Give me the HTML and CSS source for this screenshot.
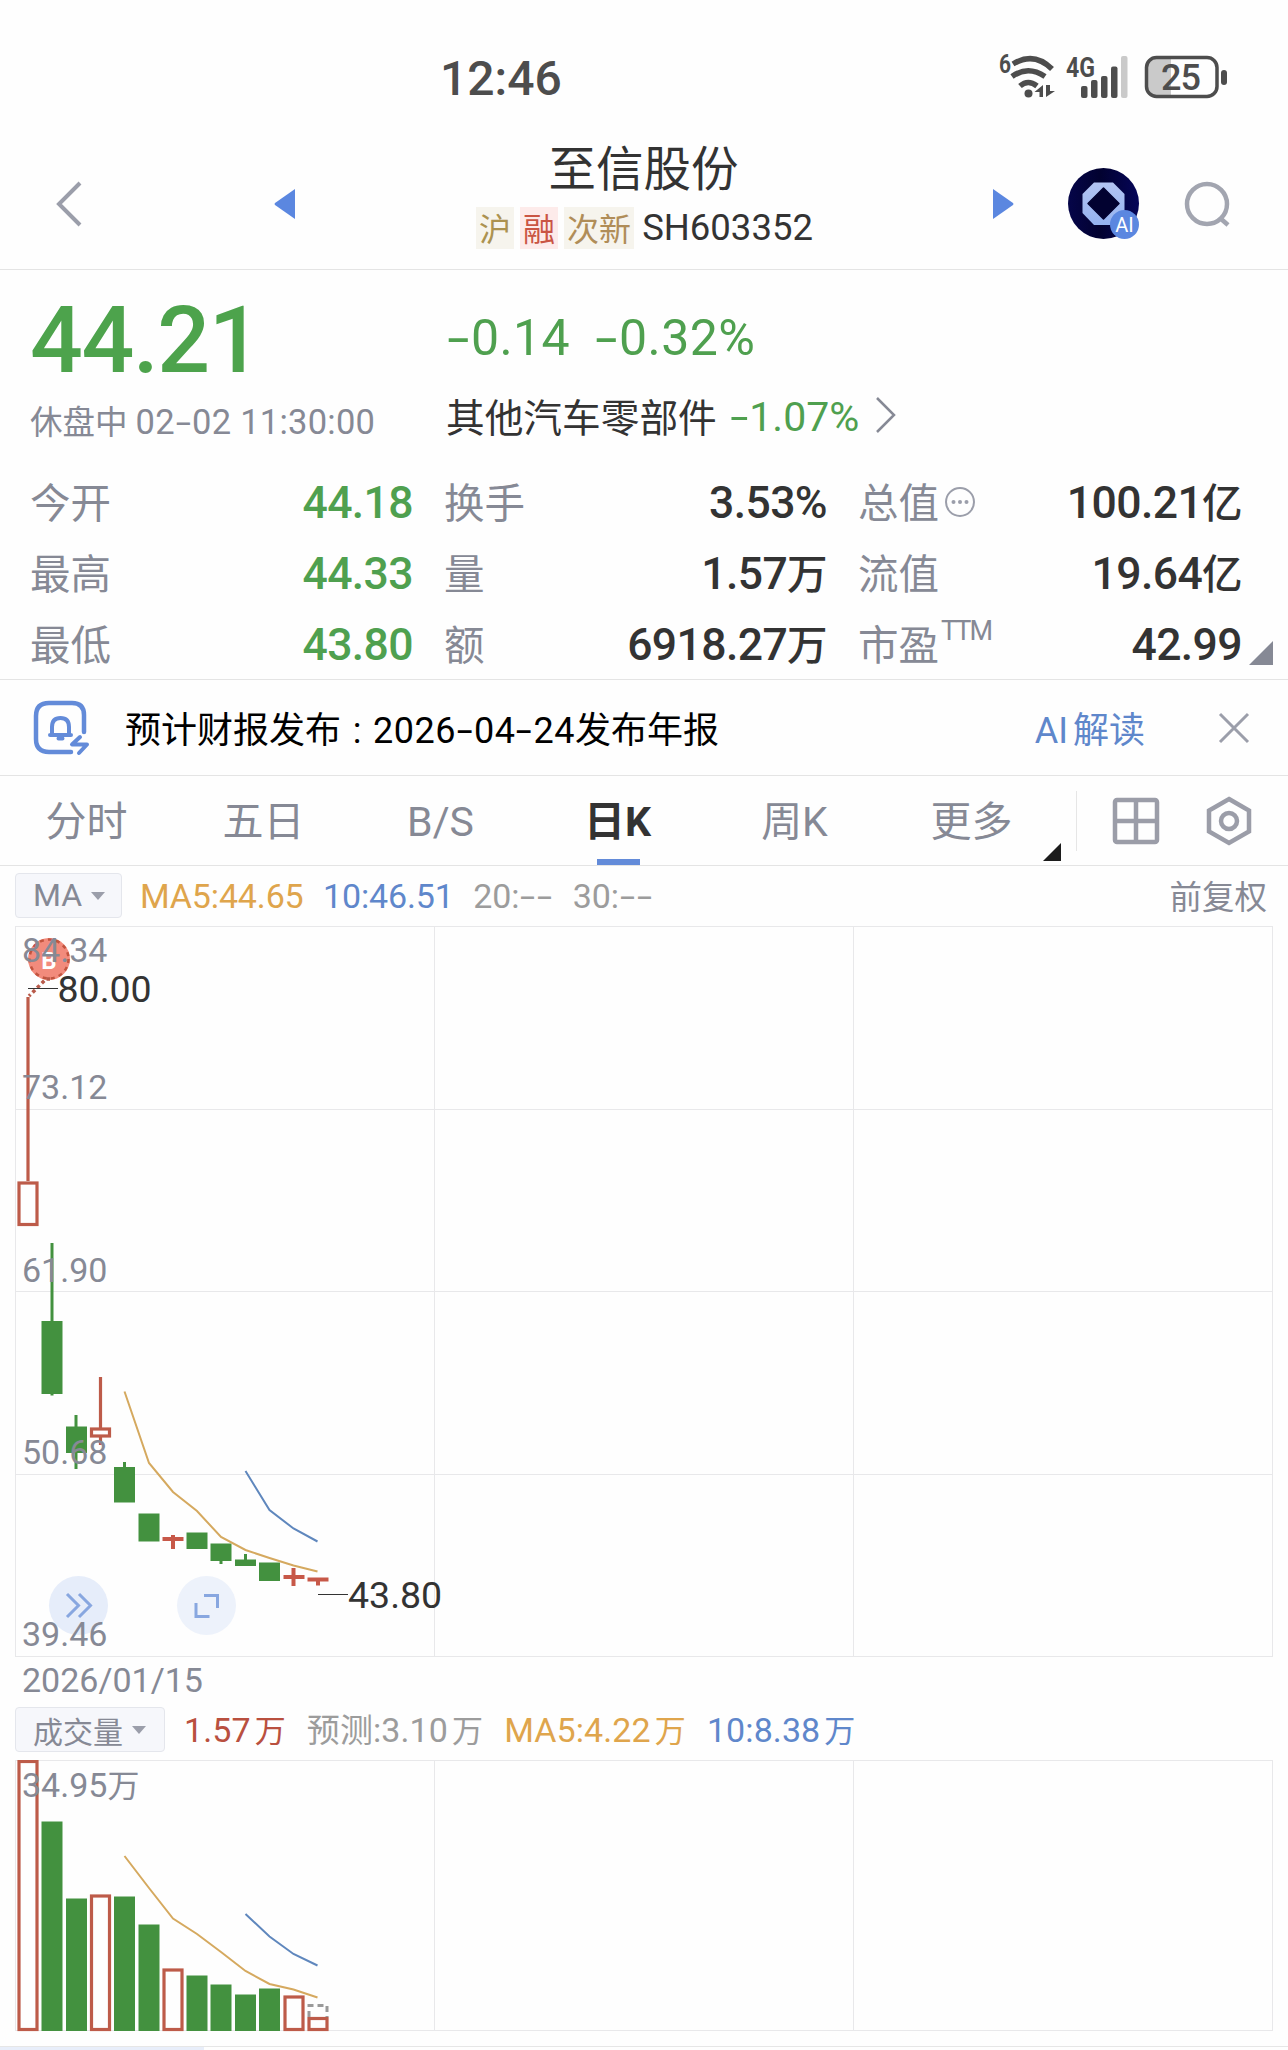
FILE: index.html
```html
<!DOCTYPE html>
<html lang="zh-CN">
<head>
    <meta charset="UTF-8">
    <meta name="viewport" content="width=device-width, initial-scale=1.0">
    <title>至信股份 SH603352</title>
    <link rel="stylesheet" href="styles.css">
</head>
<body>
    <div class="status-bar">
        <span class="clock">12:46</span>
        <svg class="status-icons" width="236" height="56" viewBox="996 48 236 56">
            <text x="999" y="73" class="net-small" textLength="12" lengthAdjust="spacingAndGlyphs">6</text>
            <g fill="none" stroke="#4d4d4d" stroke-width="5.500" stroke-linecap="butt">
                <path d="M1013 64 Q1034 51 1052 69"/>
                <path d="M1012 76.500 Q1028 65 1045 76.500"/>
                <path d="M1020 86 Q1028 79 1037 86"/>
            </g>
            <circle cx="1028.500" cy="93.500" r="4" fill="#4d4d4d"/>
            <path d="M1043 85v12h-3.500v-5h-5zM1046 85v12l9-6h-5v-6z" fill="#4d4d4d"/>
            <text x="1066" y="76.500" class="net" textLength="29" lengthAdjust="spacingAndGlyphs">4G</text>
            <g fill="#4d4d4d">
                <rect x="1081" y="86" width="6.500" height="12" rx="2"/>
                <rect x="1091" y="80" width="6.500" height="18" rx="2"/>
                <rect x="1101" y="76" width="6.500" height="22" rx="2"/>
                <rect x="1111" y="66.500" width="6.500" height="31.500" rx="2"/>
            </g>
            <rect x="1121" y="56" width="6.500" height="42" rx="2" fill="#cacaca"/>
            <path d="M1171 58h-14q-10 0-10 10v18q0 10 10 10h14z" fill="#cacaca"/>
            <rect x="1146.500" y="57.500" width="70.500" height="39" rx="10" fill="none" stroke="#4d4d4d" stroke-width="3.500"/>
            <rect x="1221" y="70" width="6" height="15" rx="3" fill="#4d4d4d"/>
            <text x="1161" y="89.500" class="battery-text" textLength="40">25</text>
        </svg>
    </div>

    <div class="header">
        <svg class="back" width="30" height="50" viewBox="0 0 30 50"><path d="M27 4 6 25l21 21" fill="none" stroke="#9b9eaa" stroke-width="4"/></svg>
        <svg class="prev" width="22" height="32" viewBox="0 0 22 32"><path d="M21 1v30L1 17q-1-1 0-2z" fill="#5b87e0"/></svg>
        <div class="title">
            <div class="name">至信股份</div>
            <div class="code-row">
                <span class="tag">沪</span>
                <span class="tag tag-red">融</span>
                <span class="tag tag-new">次新</span>
                <span class="code">SH603352</span>
            </div>
        </div>
        <svg class="next" width="22" height="32" viewBox="0 0 22 32"><path d="M1 1v30L21 17q1-1 0-2z" fill="#5b87e0"/></svg>
        <svg class="ai-logo" width="72" height="72" viewBox="0 0 72 72">
            <defs>
                <linearGradient id="oct" x1="0" y1="0" x2="0" y2="1">
                    <stop offset="0" stop-color="#b3c4f2"/>
                    <stop offset="1" stop-color="#94b2ef"/>
                </linearGradient>
                <linearGradient id="navy">
                    <stop offset="0" stop-color="#050549"/>
                    <stop offset=".45" stop-color="#020230"/>
                    <stop offset="1" stop-color="#050558"/>
                </linearGradient>
            </defs>
            <circle cx="35.500" cy="35.500" r="35.500" fill="url(#navy)"/>
            <path d="M26 14.500h19L56.500 26v19L45 57H26L14.500 45V26z" fill="url(#oct)"/>
            <path d="M35.500 20 51 35.500 35.500 51 20 35.500z" fill="#020230" stroke="#020230" stroke-width="1.500" stroke-linejoin="round"/>
            <circle cx="56.500" cy="56.500" r="14.500" fill="#5b87e0"/>
            <text x="56.500" y="63.500" class="ai-text">AI</text>
        </svg>
        <svg class="search" width="48" height="48" viewBox="0 0 48 48"><g fill="none" stroke="#a2a5b0" stroke-width="4.500"><circle cx="23" cy="23" r="20"/><path d="M36 37l8 7"/></g></svg>
    </div>

    <div class="quote">
        <div class="quote-top">
            <div class="price-col">
                <div class="price">44.21</div>
                <div class="session">休盘中 <span class="num">02<i class="dash">-</i>02 11:30:00</span></div>
            </div>
            <div class="change-col">
                <div class="change"><span><i class="dash">-</i>0.14</span><span><i class="dash">-</i>0.32%</span></div>
                <div class="industry">其他汽车零部件 <span class="ind-pct"><i class="dash">-</i>1.07%</span>
                    <svg width="22" height="38" viewBox="0 0 22 38"><path d="M2 2l17 17L2 36" fill="none" stroke="#868995" stroke-width="2.500"/></svg>
                </div>
            </div>
        </div>
        <div class="stats">
            <div class="stat"><span class="label">今开</span><span class="value green">44.18</span></div>
            <div class="stat"><span class="label">换手</span><span class="value">3.53%</span></div>
            <div class="stat"><span class="label">总值<svg class="more" width="32" height="32" viewBox="0 0 32 32"><circle cx="16" cy="16" r="14" fill="none" stroke="#9b9eaa" stroke-width="2"/><g fill="#9b9eaa"><circle cx="9.500" cy="16" r="2"/><circle cx="16" cy="16" r="2"/><circle cx="22.500" cy="16" r="2"/></g></svg></span><span class="value">100.21<em>亿</em></span></div>
            <div class="stat"><span class="label">最高</span><span class="value green">44.33</span></div>
            <div class="stat"><span class="label">量</span><span class="value">1.57<em>万</em></span></div>
            <div class="stat"><span class="label">流值</span><span class="value">19.64<em>亿</em></span></div>
            <div class="stat"><span class="label">最低</span><span class="value green">43.80</span></div>
            <div class="stat"><span class="label">额</span><span class="value">6918.27<em>万</em></span></div>
            <div class="stat"><span class="label">市盈<span class="ttm">TTM</span></span><span class="value">42.99</span></div>
        </div>
        <div class="expand"></div>
    </div>

    <div class="notice">
        <svg class="bell" width="60" height="58" viewBox="0 0 60 58">
            <g fill="none" stroke="#638bd9" stroke-width="4.500" stroke-linecap="round" stroke-linejoin="round">
                <path d="M52 33V16Q52 4 40 4H17Q4 4 4 17v23q0 13 13 13h22"/>
                <path d="M18 36h21M20 36V28q0-9 8.500-9t8.500 9v8M26.500 39.500h4" stroke-width="4"/>
                <path d="M48 38l-8 7.500h15L47 54" stroke-width="4"/>
            </g>
        </svg>
        <span class="notice-text">预计财报发布<b class="colon">:</b><span class="num">2026<i class="dash">-</i>04<i class="dash">-</i>24</span>发布年报</span>
        <span class="notice-link"><span class="num">AI</span>解读</span>
        <svg class="close" width="32" height="32" viewBox="0 0 32 32"><path d="M2 2l28 28M30 2 2 30" stroke="#9b9eaa" stroke-width="3"/></svg>
    </div>

    <div class="tabs">
        <div class="tab">分时</div>
        <div class="tab">五日</div>
        <div class="tab">B/S</div>
        <div class="tab active">日K</div>
        <div class="tab">周K</div>
        <div class="tab tab-more">更多</div>
        <div class="tab-tools">
            <svg width="48" height="48" viewBox="0 0 48 48"><g fill="none" stroke="#9b9da8" stroke-width="4.500"><rect x="3" y="3" width="42" height="42" rx="2"/><path d="M24 3v42M3 24h42"/></g></svg>
            <svg width="48" height="52" viewBox="0 0 48 52"><g fill="none" stroke="#9b9da8" stroke-width="4.500"><path d="M24 4l20 11.500v21L24 48 4 36.500v-21z"/><circle cx="24" cy="26" r="8"/></g></svg>
        </div>
    </div>

    <div class="indicator">
        <div class="picker">MA<span class="caret"></span></div>
        <span class="ma yellow">MA5:44.65</span>
        <span class="ma blue">10:46.51</span>
        <span class="ma gray">20:<i class="dash">-</i><i class="dash">-</i></span>
        <span class="ma gray">30:<i class="dash">-</i><i class="dash">-</i></span>
        <span class="adjust">前复权</span>
    </div>

    <svg class="chart" width="1288" height="780" viewBox="0 920 1288 780">
        <g class="grid">
            <rect x="15.500" y="926.500" width="1257" height="730"/>
            <path d="M15 1109.500H1273M15 1291.500H1273M15 1474.500H1273M434.500 926V1656M853.500 926V1656"/>
        </g>

        <circle cx="49" cy="959" r="21" fill="#f28b7c"/>
        <circle cx="49" cy="959" r="19.500" fill="none" stroke="#c2543f" stroke-width="2.500" stroke-dasharray="4 4.200"/>
        <text x="49" y="968.500" class="mark">B</text>
        <path d="M50 979h-4L29 996" fill="none" stroke="#b85a4a" stroke-width="3.500" stroke-dasharray="3.500 3"/>
        <path d="M28 988.500h30M318 1594.500h30" stroke="#333" stroke-width="1.200"/>

        <!-- round buttons -->
        <circle cx="78.500" cy="1605.500" r="29.500" fill="#e6edfa"/>
        <circle cx="206.500" cy="1605.500" r="29.500" fill="#edf2fb"/>
        <g fill="none" stroke="#88a7e0" stroke-width="3">
            <path d="M67 1594l11.500 11.500L67 1617M79 1594l11.500 11.500L79 1617"/>
            <path d="M204 1595.500h13.500v12.500M196 1603v13.500h13.500"/>
        </g>

        <!-- rising candles -->
        <g class="up">
            <path d="M28 997V1181M100.500 1377V1428M100.500 1437V1445"/>
            <rect x="19" y="1183" width="18" height="41.500"/>
            <rect x="91.500" y="1429" width="18" height="7"/>
            <path d="M162.500 1539H183.500M173 1535V1549M283.500 1577H304.500M293.500 1568V1586M307.500 1579.500H328.500M318 1578V1585.500" class="flat"/>
        </g>
        <!-- falling candles -->
        <g class="down">
            <path d="M50.500 1243h3v152.500h-3zM41.500 1321h21v73h-21z"/>
            <path d="M74.500 1415h3v54h-3zM66 1426.500h21V1453H66z"/>
            <path d="M123 1462h3v7h-3zM114 1467h21v35.500h-21z"/>
            <path d="M138.500 1513.500h21v28h-21zM186.500 1532.500h21V1549h-21z"/>
            <path d="M210.500 1543.500h21V1561h-21zM219.500 1560h3v4h-3z"/>
            <path d="M235 1559.500h21v6.500h-21zM244 1554h3v12h-3zM259 1562.500h21V1581h-21z"/>
        </g>
        <polyline class="line-ma5" points="124.500,1391.500 149,1463 173,1492 197,1511 221,1537 245.500,1550 269.500,1558 293.500,1565.500 317.500,1571.500"/>
        <polyline class="line-ma10" points="245.500,1471 269.500,1510 293.500,1528.500 317.500,1541.500"/>

        <g class="axis">
            <text x="22" y="962">84.34</text>
            <text x="22" y="1098.500">73.12</text>
            <text x="22" y="1281.500">61.90</text>
            <text x="22" y="1463.500">50.68</text>
            <text x="22" y="1645.500">39.46</text>
            <text x="22" y="1691.500">2026/01/15</text>
        </g>
        <text x="57.500" y="1001.500" class="extreme">80.00</text>
        <text x="348" y="1607.500" class="extreme">43.80</text>
    </svg>

    <div class="indicator volume-row">
        <div class="picker picker-vol">成交量<span class="caret"></span></div>
        <span class="ma red">1.57<em>万</em></span>
        <span class="ma gray"><em class="lead">预测</em>:3.10<em>万</em></span>
        <span class="ma yellow">MA5:4.22<em>万</em></span>
        <span class="ma blue">10:8.38<em>万</em></span>
    </div>

    <svg class="chart" width="1288" height="286" viewBox="0 1760 1288 286">
        <g class="grid">
            <rect x="15.500" y="1760.500" width="1257" height="270"/>
            <path d="M434.500 1760V2030M853.500 1760V2030"/>
        </g>
        <g class="up">
            <rect x="19" y="1761.500" width="18" height="268"/>
            <rect x="91.500" y="1896" width="18" height="133.500"/>
            <rect x="164" y="1970" width="18" height="59.500"/>
            <rect x="285" y="1997" width="18" height="32.500"/>
            <rect x="309" y="2018.500" width="18" height="11"/>
        </g>
        <path d="M309 2017V2005.500H327V2017" fill="none" stroke="#9a9a9a" stroke-width="3" stroke-dasharray="6 4"/>
        <g class="down">
            <path d="M41.500 1821.500h21V2031h-21zM66 1898.500h21V2031H66zM114 1896.500h21V2031h-21z"/>
            <path d="M138.500 1924.500h21V2031h-21zM186.500 1975.500h21V2031h-21zM210.500 1984.500h21V2031h-21z"/>
            <path d="M235 1994.500h21V2031h-21zM259 1988.500h21V2031h-21z"/>
        </g>
        <polyline class="line-ma5" points="124.500,1856 149,1888 173,1918.500 197,1934 221,1952 245.500,1971 269.500,1984 293.500,1989.500 317.500,1997.500"/>
        <polyline class="line-ma10" points="245.500,1914 269.500,1936.500 293.500,1954 317.500,1965.500"/>
        <g class="axis"><text x="22" y="1797">34.95<tspan class="axis-cjk">万</tspan></text></g>
    </svg>
    <div class="footer"><div class="footer-active"></div></div>
</body>
</html>
```

FILE: styles.css
```css
* {
    box-sizing: border-box;
}
body {
    margin: 0;
    width: 1288px;
    height: 2050px;
    overflow: hidden;
    background-color: #fefefe;
    color: #333;
    font-family: Roboto, "Noto Sans CJK SC", sans-serif;
}
svg {
    display: block;
    flex: none;
}
i, em {
    font-style: normal;
}
em {
    line-height: 0;
}
.dash {
    display: inline-block;
    width: 0.5em;
    text-align: center;
    transform: scaleX(1.6);
}
.green {
    color: #4fa04f;
}
.yellow {
    color: #dfa54c;
}
.blue {
    color: #5f87cb;
}
.gray {
    color: #9c9c9c;
}
.red {
    color: #b9503f;
}

/* status bar */
.status-bar {
    display: flex;
    justify-content: space-between;
    height: 130px;
    padding: 48px 56px 0 440px;
    color: #4d4d4d;
}
.clock {
    font-size: 48px;
    line-height: 62px;
    font-weight: 500;
}
.net-small {
    font-size: 25px;
    font-weight: 700;
    fill: #4d4d4d;
}
.net {
    font-size: 27px;
    font-weight: 700;
    fill: #4d4d4d;
}
.battery-text {
    font-size: 36px;
    font-weight: 500;
    fill: #4d4d4d;
}

/* header */
.header {
    display: flex;
    height: 140px;
    border-bottom: 1px solid #e4e4e4;
    padding-left: 53px;
}
.back {
    margin: 49px 191px 0 0;
}
.prev {
    margin-top: 58px;
}
.title {
    width: 696px;
    display: flex;
    flex-direction: column;
    align-items: center;
}
.name {
    height: 72px;
    font-size: 47.5px;
    line-height: 81px;
    margin-left: -1px;
}
.code-row {
    display: flex;
    margin-left: 1px;
    margin-top: 5px;
}
.tag {
    height: 42px;
    line-height: 46px;
    padding: 0 3px;
    margin-right: 6px;
    font-size: 32px;
    background-color: #f6f4ed;
    color: #ac9250;
}
.tag-red {
    background-color: #fdebea;
    color: #ca5544;
}
.tag-new {
    color: #b08d58;
}
.code {
    margin-left: 2px;
    font-size: 36.5px;
    line-height: 41px;
}
.next {
    margin: 58px 54px 0 0;
}
.ai-logo {
    margin: 38px 44px 0 0;
}
.ai-text {
    font-size: 20px;
    fill: #fff;
    text-anchor: middle;
}
.search {
    margin-top: 51px;
}

/* quote */
.quote {
    position: relative;
    height: 410px;
    padding-left: 30px;
    border-bottom: 1px solid #e4e4e4;
}
.quote-top {
    display: flex;
    height: 196px;
}
.price-col {
    width: 416px;
}
.price {
    height: 126px;
    padding-top: 16px;
    font-size: 93px;
    font-weight: 500;
    line-height: 110px;
    letter-spacing: -1.4px;
    color: #4da34c;
}
.session {
    font-size: 32.5px;
    line-height: 52px;
    color: #868995;
    white-space: nowrap;
}
.session .num {
    font-size: 34.5px;
    letter-spacing: 0.25px;
}
.change {
    display: flex;
    gap: 24px;
    height: 108px;
    padding-top: 38px;
    font-size: 50px;
    line-height: 60px;
    letter-spacing: 0.4px;
    color: #4fa04f;
}
.industry {
    display: flex;
    align-items: center;
    height: 78px;
    padding-bottom: 4px;
    font-size: 38.7px;
    white-space: nowrap;
}
.ind-pct {
    margin: 4px 16px 0 12px;
    font-size: 41px;
    color: #4fa04f;
}
.stats {
    display: grid;
    grid-template-columns: 414px 414px 384px;
    grid-auto-rows: 71px;
    width: 1212px;
}
.stat {
    display: flex;
    justify-content: space-between;
    align-items: center;
    padding-right: 31px;
    font-size: 40.5px;
    white-space: nowrap;
}
.stat:nth-child(3n) {
    padding-right: 0;
}
.label {
    display: flex;
    align-items: center;
    margin-bottom: 3px;
    color: #868995;
}
.more {
    margin: 3px 0 0 5px;
}
.ttm {
    font-size: 27px;
    letter-spacing: -2px;
    margin: -22px 0 0 2px;
}
.value {
    margin-top: 3px;
    font-size: 44.5px;
    font-weight: 500;
    letter-spacing: -0.6px;
}
.value em {
    font-size: 40.5px;
}
.expand {
    position: absolute;
    right: 15px;
    bottom: 14px;
    border-left: 24px solid transparent;
    border-bottom: 24px solid #868995;
}

/* notice */
.notice {
    display: flex;
    align-items: center;
    height: 96px;
    padding: 0 38px 0 32px;
    border-bottom: 1px solid #e4e4e4;
    color: #000;
    font-size: 36px;
    white-space: nowrap;
}
.bell {
    margin-right: 33px;
}
.notice-text, .notice-link {
    margin-bottom: 2px;
}
.notice-text .num {
    letter-spacing: 0.5px;
}
.colon {
    display: inline-block;
    width: 32px;
    text-align: center;
    font-weight: 400;
}
.notice-link {
    margin-left: auto;
    color: #5f87cb;
}
.notice-link .num {
    margin-right: 5px;
}
.close {
    margin-left: 73px;
}

/* tabs */
.tabs {
    display: flex;
    height: 90px;
    border-bottom: 1px solid #e4e4e4;
    color: #868995;
    font-size: 41px;
}
.tab {
    position: relative;
    width: 177px;
    padding-right: 4px;
    line-height: 92px;
    text-align: center;
}
.active {
    color: #333;
    font-weight: 700;
}
.active::after {
    content: "";
    position: absolute;
    left: 66px;
    bottom: 0;
    width: 43px;
    height: 6px;
    background-color: #638bd9;
}
.tab-more::after {
    content: "";
    position: absolute;
    right: 1px;
    bottom: 4px;
    border-left: 18px solid transparent;
    border-bottom: 18px solid #1c1c1c;
}
.tab-tools {
    display: flex;
    align-items: center;
    gap: 45px;
    height: 60px;
    margin: 15px 0 0 14px;
    padding-left: 35px;
    border-left: 1px solid #e6e6e6;
}

/* indicator rows */
.indicator {
    display: flex;
    align-items: center;
    height: 54px;
    padding: 4px 21px 0 15px;
    font-size: 34px;
    white-space: nowrap;
}
.picker {
    display: flex;
    align-items: center;
    width: 107px;
    height: 45px;
    margin-right: 18px;
    padding-left: 17px;
    border: 1px solid #e4e6ec;
    border-radius: 4px;
    background-color: #f6f7fb;
    color: #868995;
    font-size: 32px;
}
.picker-vol {
    width: 150px;
    margin-right: 19px;
    font-size: 30px;
}
.caret {
    margin: 1px 0 0 9px;
    border: 7px solid transparent;
    border-top: 8px solid #9b9eaa;
    border-bottom: 0;
}
.ma {
    margin: 2px 19.5px 0 0;
    letter-spacing: -0.15px;
}
.ma em {
    font-size: 31px;
    margin-left: 4px;
}
.ma .lead {
    font-size: 33px;
    margin-left: 0;
}
.adjust {
    margin-left: auto;
    margin-bottom: 1px;
    font-size: 32.5px;
    color: #868995;
}
.volume-row {
    height: 60px;
    padding-top: 0;
    padding-bottom: 1px;
}
.volume-row .ma {
    margin: 0 21px 0 0;
    letter-spacing: 0.1px;
}

/* charts */
.grid {
    fill: none;
    stroke: #e8e8ea;
    stroke-width: 1;
}
.up {
    fill: none;
    stroke: #bd5b49;
    stroke-width: 3.2;
}
.flat {
    stroke: #c75848;
    stroke-width: 4;
}
.down {
    fill: #43913f;
}
.line-ma5 {
    fill: none;
    stroke: #d5a95f;
    stroke-width: 2;
}
.line-ma10 {
    fill: none;
    stroke: #5f87bd;
    stroke-width: 2;
}
.axis {
    font-size: 34px;
    fill: #868995;
}
.axis-cjk {
    font-size: 32px;
}
.extreme {
    font-size: 37.5px;
    fill: #333;
}
.mark {
    font-size: 24px;
    font-weight: 700;
    fill: #fff;
    text-anchor: middle;
}
.footer {
    height: 4px;
    border-top: 1px solid #e6e6e6;
}
.footer-active {
    width: 204px;
    height: 3px;
    background-color: #e8eefa;
}
```
